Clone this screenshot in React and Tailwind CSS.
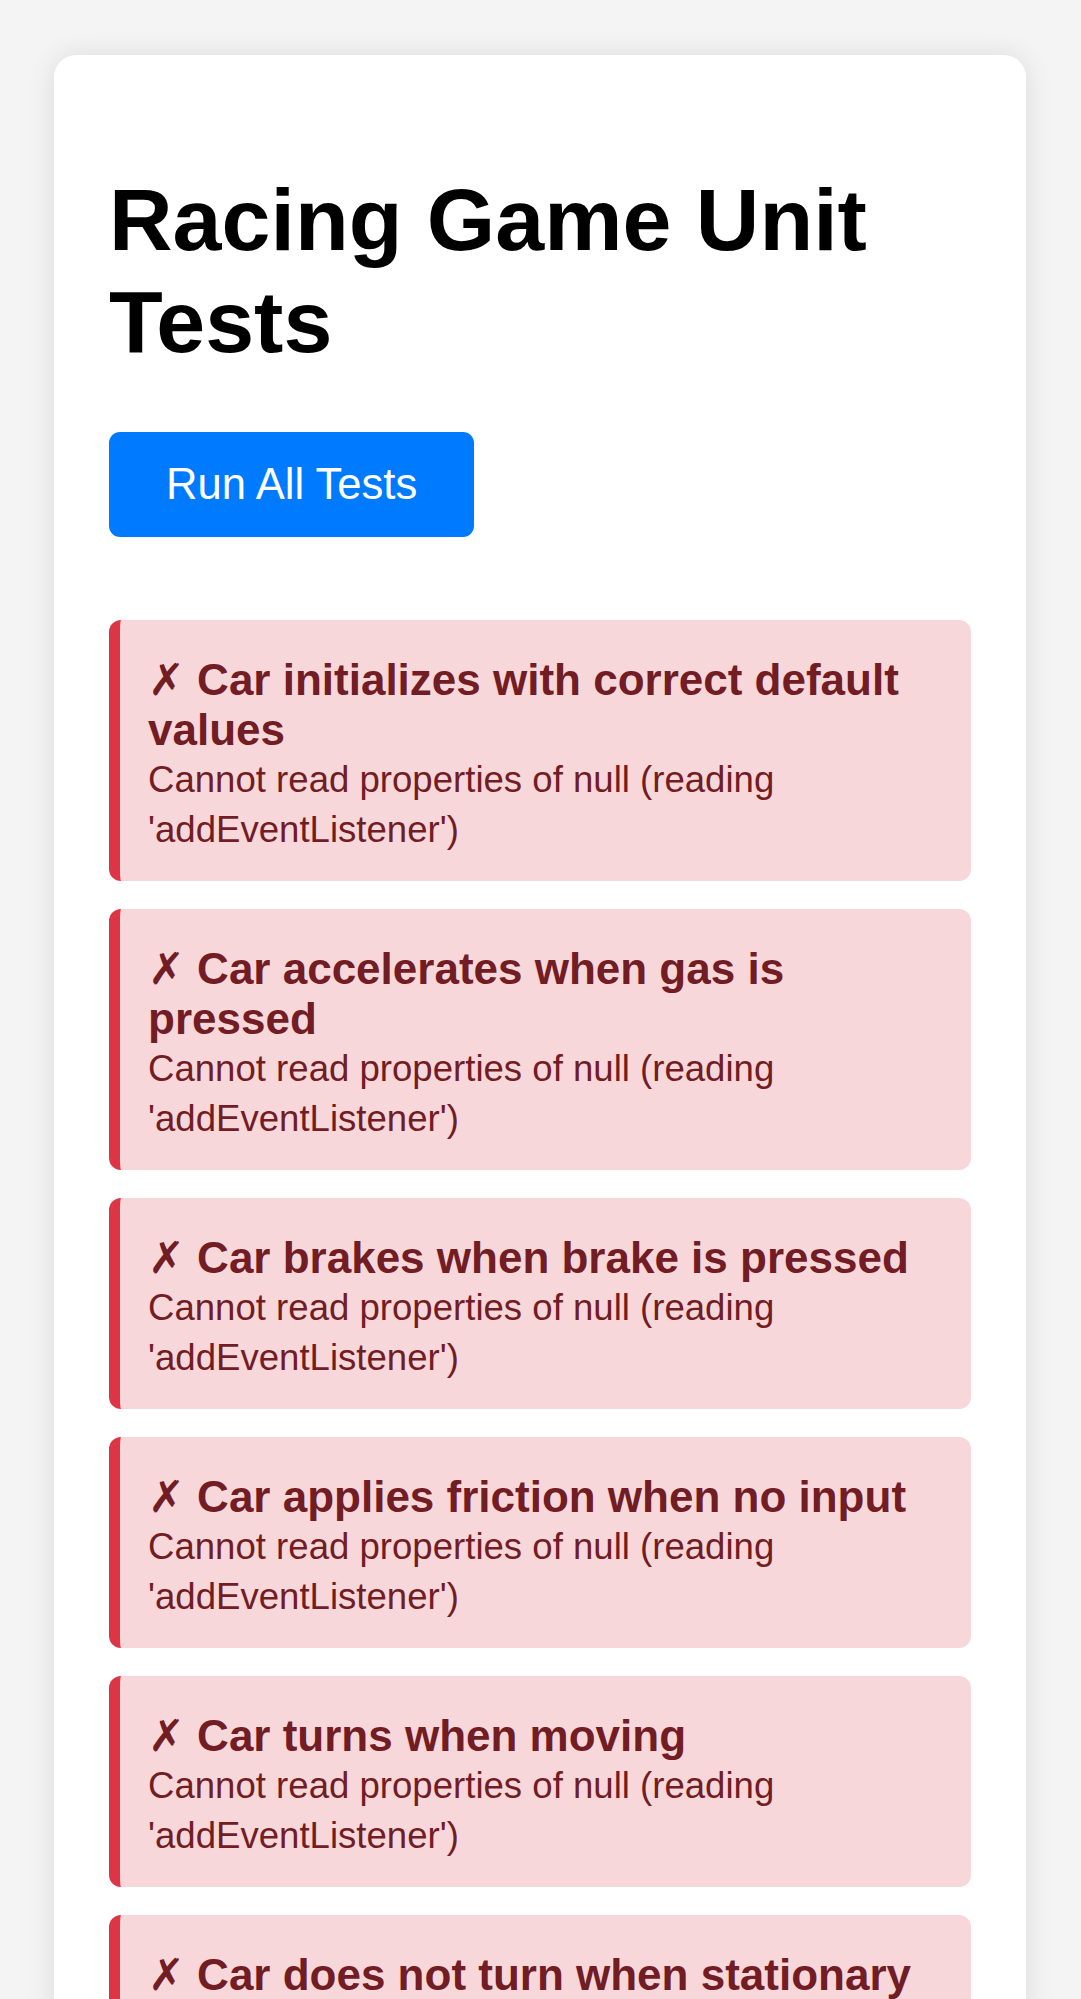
import React from "react";

const tests = [
  "Car initializes with correct default values",
  "Car accelerates when gas is pressed",
  "Car brakes when brake is pressed",
  "Car applies friction when no input",
  "Car turns when moving",
  "Car does not turn when stationary",
  "Car speed is limited to max speed",
  "Track collision is detected",
];

function TestResult({ name }) {
  return (
    <div className="border-l-[11px] border-[#dc3545] bg-[#f8d7da] rounded-[12px] pl-[28px] pr-[28px] pt-[35px] pb-[26px] text-[#721c24]">
      <div className="text-[44px] leading-[50px] font-bold">
        <span className="font-['DejaVu_Sans',sans-serif] font-normal">✗</span> {name}
      </div>
      <div className="text-[36.6px] leading-[50px]">
        Cannot read properties of null (reading 'addEventListener')
      </div>
    </div>
  );
}

export default function App() {
  return (
    <div className="min-h-screen bg-[#f4f4f4] pt-[55px] pb-[55px] font-['Liberation_Sans',Arial,sans-serif]">
      <div className="ml-[54px] w-[972px] rounded-[22px] bg-white px-[55px] pt-[55px] pb-[55px] shadow-[0_0_28px_rgba(0,0,0,0.1)]">
        <h1 className="text-[88px] leading-[102px] font-bold text-black my-[59px]">
          Racing Game Unit Tests
        </h1>
        <button className="bg-[#007bff] text-white rounded-[11px] px-[57px] py-[28px] text-[43.6px] leading-[49px]">
          Run All Tests
        </button>
        <div className="mt-[83px] flex flex-col gap-[28px]">
          {tests.map((t) => (
            <TestResult key={t} name={t} />
          ))}
        </div>
      </div>
    </div>
  );
}
